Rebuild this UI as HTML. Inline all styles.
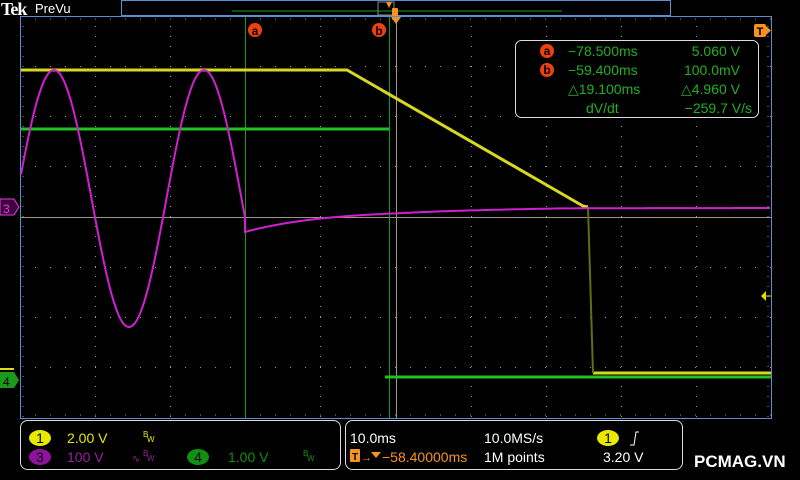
<!DOCTYPE html>
<html><head><style>
body{margin:0;background:#000;width:800px;height:480px;overflow:hidden;font-family:"Liberation Sans",sans-serif}
svg{position:absolute;left:0;top:0}
</style></head><body>
<svg width="800" height="480" viewBox="0 0 800 480" font-family="Liberation Sans, sans-serif">
<rect width="800" height="480" fill="#000"/>
<!-- top -->
<text x="1" y="15" fill="#fff" font-size="18" font-weight="bold" font-family="Liberation Serif, serif" letter-spacing="-1">Tek</text>
<text x="35" y="13" fill="#fff" font-size="13">PreVu</text>
<rect x="121.5" y="0.5" width="549" height="15" fill="none" stroke="#5b8fd0"/>
<line x1="232" y1="11" x2="562" y2="11" stroke="#1a9a1a"/>
<rect x="378" y="2" width="16" height="13" fill="none" stroke="#888"/>
<rect x="392" y="8" width="6" height="12" fill="#f7931e" rx="1"/>
<polygon points="386,2 392,2 389,8" fill="#f7931e"/>
<!-- grid frame -->
<rect x="20.5" y="16.5" width="751" height="402" fill="none" stroke="#5b8fd0"/>
<g stroke="#a09880" stroke-width="1" stroke-dasharray="1 14" >
<line x1="35" y1="66.5" x2="771" y2="66.5"/>
<line x1="35" y1="116.5" x2="771" y2="116.5"/>
<line x1="35" y1="166.5" x2="771" y2="166.5"/>
<line x1="35" y1="267.5" x2="771" y2="267.5"/>
<line x1="35" y1="317.5" x2="771" y2="317.5"/>
<line x1="35" y1="367.5" x2="771" y2="367.5"/>
<line x1="95.5" y1="26" x2="95.5" y2="418" stroke-dasharray="1 9"/>
<line x1="170.5" y1="26" x2="170.5" y2="418" stroke-dasharray="1 9"/>
<line x1="320.5" y1="26" x2="320.5" y2="418" stroke-dasharray="1 9"/>
<line x1="471.5" y1="26" x2="471.5" y2="418" stroke-dasharray="1 9"/>
<line x1="546.5" y1="26" x2="546.5" y2="418" stroke-dasharray="1 9"/>
<line x1="621.5" y1="26" x2="621.5" y2="418" stroke-dasharray="1 9"/>
<line x1="696.5" y1="26" x2="696.5" y2="418" stroke-dasharray="1 9"/>
<line x1="23" y1="26" x2="23" y2="418" stroke-dasharray="1 9"/>
<line x1="768" y1="26" x2="768" y2="418" stroke-dasharray="1 9"/>
<line x1="35" y1="19" x2="771" y2="19" stroke-dasharray="1 14"/>
<line x1="35" y1="415" x2="771" y2="415" stroke-dasharray="1 14"/>
</g>
<line x1="21" y1="217.5" x2="771" y2="217.5" stroke="#a09880"/>
<line x1="396.5" y1="17" x2="396.5" y2="418" stroke="#a09880"/>
<!-- cursors -->
<line x1="245.5" y1="17" x2="245.5" y2="418" stroke="#1a9a1a"/>
<line x1="389.5" y1="17" x2="389.5" y2="418" stroke="#1a9a1a"/>
<polygon points="391,17 401,17 396,24" fill="#f7931e"/>
<circle cx="255" cy="30" r="7" fill="#f04010"/><text x="255" y="35" fill="#000" font-size="12" font-weight="bold" text-anchor="middle">a</text>
<circle cx="379" cy="30" r="7" fill="#f04010"/><text x="379" y="35" fill="#000" font-size="12" font-weight="bold" text-anchor="middle">b</text>
<rect x="754" y="24" width="12" height="13" rx="2" fill="#f7931e"/><polygon points="766,26 771,30.5 766,35" fill="#f7931e"/><text x="760" y="35" fill="#000" font-size="11" font-weight="bold" text-anchor="middle">T</text>
<!-- waveforms -->
<polyline points="21,129 389,129" stroke="#22c022" stroke-width="3" fill="none"/>
<polyline points="385,377 771,377" stroke="#22c022" stroke-width="3" fill="none"/>
<polyline points="21,70 347,70 583,206 588,207" stroke="#d8d820" stroke-width="3" fill="none"/>
<polyline points="593,373 771,373" stroke="#d8d820" stroke-width="3" fill="none"/>
<line x1="588" y1="207" x2="593" y2="373" stroke="#6a6a10" stroke-width="2"/>
<path id="mag" fill="none" stroke="#d020d0" stroke-width="2" d=""/>
<!-- cursor readout -->
<rect x="515.5" y="40.5" width="243" height="77" rx="6" fill="#000" stroke="#ddd"/>
<g fill="#22b022" font-size="14">
<circle cx="547" cy="51" r="7" fill="#f04010"/><text x="547" y="55" fill="#000" font-size="12" font-weight="bold" text-anchor="middle">a</text>
<circle cx="547" cy="70" r="7" fill="#f04010"/><text x="547" y="74" fill="#000" font-size="12" font-weight="bold" text-anchor="middle">b</text>
<text x="568" y="56">−78.500ms</text><text x="740" y="56" text-anchor="end">5.060 V</text>
<text x="568" y="75">−59.400ms</text><text x="740" y="75" text-anchor="end">100.0mV</text>
<text x="568" y="94">△19.100ms</text><text x="740" y="94" text-anchor="end">△4.960 V</text>
<text x="586" y="113">dV/dt</text><text x="752" y="113" text-anchor="end">−259.7 V/s</text>
</g>
<!-- markers -->
<polygon points="0,199 14,199 19,207 14,215 0,215" fill="#400040" stroke="#e040e0"/>
<text x="3" y="213" fill="#e040e0" font-size="12">3</text>
<polygon points="0,372 14,372 19,380 14,388 0,388" fill="#1a9a1a"/>
<text x="3" y="386" fill="#000" font-size="12">4</text>
<line x1="0" y1="369" x2="14" y2="369" stroke="#e0e000" stroke-width="2"/>
<polygon points="761,296 766,291 766,301" fill="#e0e000"/><line x1="766" y1="296" x2="771" y2="296" stroke="#e0e000"/>
<!-- bottom panels -->
<rect x="20.5" y="420.5" width="320" height="49" rx="7" fill="none" stroke="#ddd"/>
<rect x="345.5" y="420.5" width="337" height="49" rx="7" fill="none" stroke="#ddd"/>
<g font-size="14">
<ellipse cx="40" cy="438" rx="11" ry="8" fill="#e8e800"/><text x="40" y="443" text-anchor="middle" fill="#000">1</text>
<text x="67" y="443" fill="#e8e800">2.00 V</text>
<text x="143" y="437" fill="#e8e800" font-size="8">B</text><text x="147" y="442" fill="#e8e800" font-size="8">W</text>
<ellipse cx="40" cy="457" rx="11" ry="8" fill="#9010a0"/><text x="40" y="462" text-anchor="middle" fill="#000">3</text>
<text x="67" y="462" fill="#9a209a">100 V</text>
<text x="132" y="462" fill="#9a209a" font-size="10">∿</text><text x="143" y="456" fill="#9a209a" font-size="8">B</text><text x="147" y="461" fill="#9a209a" font-size="8">W</text>
<ellipse cx="198" cy="457" rx="11" ry="8" fill="#109010"/><text x="198" y="462" text-anchor="middle" fill="#000">4</text>
<text x="228" y="462" fill="#109010">1.00 V</text>
<text x="303" y="456" fill="#109010" font-size="8">B</text><text x="307" y="461" fill="#109010" font-size="8">W</text>
<text x="350" y="443" fill="#fff">10.0ms</text>
<text x="484" y="443" fill="#fff">10.0MS/s</text>
<ellipse cx="608" cy="438" rx="11" ry="8" fill="#e8e800"/><text x="608" y="443" text-anchor="middle" fill="#000">1</text>
<path d="M630 445 L634 445 L636 432 L639 432" stroke="#fff" fill="none"/>
<rect x="350" y="449" width="10" height="13" rx="1" fill="#f7931e"/><text x="355" y="460" text-anchor="middle" fill="#000" font-size="10" font-weight="bold">T</text>
<text x="361" y="461" fill="#f7931e" font-size="11">→</text>
<polygon points="371,452 381,452 376,458" fill="#f7931e"/>
<text x="382" y="462" fill="#f7931e">−58.40000ms</text>
<text x="484" y="462" fill="#fff">1M points</text>
<text x="603" y="462" fill="#fff">3.20 V</text>
<text x="694" y="467" fill="#fff" font-size="17" font-weight="bold">PCMAG.VN</text>
</g>
</svg>
<script>
var d="";
for(var x=21;x<=245;x++){var y=198.5-128.5*Math.cos((x-54)/150*2*Math.PI);d+=(x==21?"M":"L")+x+" "+y.toFixed(1);}
for(var x=245;x<=771;x+=3){var y=210+22*Math.exp(-(x-245)/80)-(x>400?Math.min(2,(x-400)/80):0);d+="L"+x+" "+y.toFixed(1);}
document.getElementById("mag").setAttribute("d",d);
</script>
</body></html>
